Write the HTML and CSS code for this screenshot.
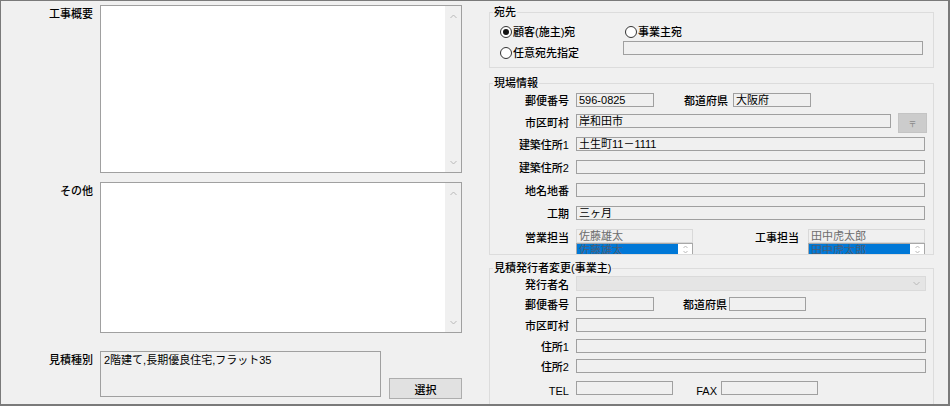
FILE: index.html
```html
<!DOCTYPE html>
<html lang="ja">
<head>
<meta charset="utf-8">
<title>見積</title>
<link rel="stylesheet" href="styles.css">
</head>
<body>
<div class="window">
  <div class="left">
    <div class="lrow memo">
      <div class="lbl">工事概要</div>
      <div class="tarea tall">
        <div class="vscroll">
          <svg class="chev" width="7" height="5" viewBox="0 0 7 5"><polyline points="0.5,4 3.5,1 6.5,4"/></svg>
          <svg class="chev" width="7" height="5" viewBox="0 0 7 5"><polyline points="0.5,1 3.5,4 6.5,1"/></svg>
        </div>
      </div>
    </div>
    <div class="lrow other">
      <div class="lbl">その他</div>
      <div class="tarea mid">
        <div class="vscroll">
          <svg class="chev" width="7" height="5" viewBox="0 0 7 5"><polyline points="0.5,4 3.5,1 6.5,4"/></svg>
          <svg class="chev" width="7" height="5" viewBox="0 0 7 5"><polyline points="0.5,1 3.5,4 6.5,1"/></svg>
        </div>
      </div>
    </div>
    <div class="lrow kind">
      <div class="lbl">見積種別</div>
      <div class="kindbox">2階建て,長期優良住宅,フラット35</div>
      <button class="btn" type="button">選択</button>
    </div>
  </div>

  <div class="right">
    <fieldset class="grp g-dest">
      <legend>宛先</legend>
      <div class="dest">
        <div class="radio"><span class="dot checked"></span>顧客(施主)宛</div>
        <div class="radio r2"><span class="dot"></span>事業主宛</div>
        <div class="radio low"><span class="dot"></span>任意宛先指定</div>
        <div class="inp dest-inp"></div>
      </div>
    </fieldset>

    <fieldset class="grp g-site">
      <legend>現場情報</legend>
      <div class="form">
        <div class="frow">
          <div class="flbl">郵便番号</div>
          <div class="inp w78">596-0825</div>
          <div class="flbl mid-lbl">都道府県</div>
          <div class="inp w78 pref">大阪府</div>
        </div>
        <div class="frow tall-row">
          <div class="flbl">市区町村</div>
          <div class="inp city">岸和田市</div>
          <button class="zip-btn" type="button">〒</button>
        </div>
        <div class="frow r3">
          <div class="flbl">建築住所1</div>
          <div class="inp full">土生町11－1111</div>
        </div>
        <div class="frow r9">
          <div class="flbl">建築住所2</div>
          <div class="inp full"></div>
        </div>
        <div class="frow r9">
          <div class="flbl">地名地番</div>
          <div class="inp full"></div>
        </div>
        <div class="frow r9">
          <div class="flbl">工期</div>
          <div class="inp full">三ヶ月</div>
        </div>
        <div class="frow r9 staff-row">
          <div class="flbl">営業担当</div>
          <div class="staff">
            <div class="staff-top">佐藤雄太</div>
            <div class="staff-list">
              <div class="sel">佐藤雄太</div>
              <div class="spin"><svg width="5" height="9" viewBox="0 0 5 9"><polyline points="0.5,3 2.5,1 4.5,3"/><polyline points="0.5,6 2.5,8 4.5,6"/></svg></div>
            </div>
          </div>
          <div class="flbl staff-lbl">工事担当</div>
          <div class="staff">
            <div class="staff-top">田中虎太郎</div>
            <div class="staff-list">
              <div class="sel">田中虎太郎</div>
              <div class="spin"><svg width="5" height="9" viewBox="0 0 5 9"><polyline points="0.5,3 2.5,1 4.5,3"/><polyline points="0.5,6 2.5,8 4.5,6"/></svg></div>
            </div>
          </div>
        </div>
      </div>
    </fieldset>

    <fieldset class="grp g-issuer">
      <legend>見積発行者変更(事業主)</legend>
      <div class="form issuer">
        <div class="frow combo-row">
          <div class="flbl">発行者名</div>
          <div class="combo">
            <svg width="7" height="5" viewBox="0 0 7 5"><polyline points="0.5,1 3.5,4 6.5,1"/></svg>
          </div>
        </div>
        <div class="frow g6">
          <div class="flbl">郵便番号</div>
          <div class="inp w78"></div>
          <div class="flbl mid-lbl2">都道府県</div>
          <div class="inp w77"></div>
        </div>
        <div class="frow g7">
          <div class="flbl">市区町村</div>
          <div class="inp w350"></div>
        </div>
        <div class="frow g7">
          <div class="flbl">住所1</div>
          <div class="inp w350"></div>
        </div>
        <div class="frow g6">
          <div class="flbl">住所2</div>
          <div class="inp w350"></div>
        </div>
        <div class="frow g8">
          <div class="flbl tel">TEL</div>
          <div class="inp w97"></div>
          <div class="flbl fax">FAX</div>
          <div class="inp w97"></div>
        </div>
      </div>
    </fieldset>
  </div>
</div>
</body>
</html>
```
FILE: styles.css
```css
* { box-sizing: border-box; }
html, body { margin: 0; padding: 0; }
body {
  width: 950px;
  height: 406px;
  overflow: hidden;
  background: #f0f0f0;
  font-family: "Liberation Sans", "Noto Sans CJK JP", sans-serif;
  font-size: 11px;
  color: #000;
}
.window {
  width: 950px;
  height: 406px;
  border-style: solid;
  border-color: #7a7a7a;
  border-width: 1px 2px 2px 1px;
  display: flex;
  align-items: flex-start;
  overflow: hidden;
  background: #f0f0f0;
}

/* left column */
.left { width: 461px; flex: none; display: flex; flex-direction: column; }
.lrow { display: flex; gap: 7px; flex: none; }
.lbl { width: 92px; flex: none; text-align: right; line-height: 14px; padding-top: 2px; font-weight: 500; }
.memo { margin-top: 4px; }
.other { margin-top: 9px; }
.kind { margin-top: 18px; height: 48px; }
.tarea {
  width: 362px;
  background: #fff;
  border: 1px solid #a0a0a0;
  display: flex;
  justify-content: flex-end;
}
.tall { height: 168px; }
.mid { height: 151px; }
.vscroll {
  width: 16px;
  background: #f0f0f0;
  display: flex;
  flex-direction: column;
  justify-content: space-between;
  align-items: center;
  padding: 8px 0 7px;
}
.chev polyline, .combo polyline, .spin polyline { fill: none; stroke: #b8b8b8; stroke-width: 1; }
.kindbox {
  width: 282px;
  height: 46px;
  border: 1px solid #a0a0a0;
  background: #f0f0f0;
  padding: 1px 3px;
  line-height: 14px;
}
.btn {
  width: 73px;
  height: 21px;
  margin-left: 1px;
  align-self: flex-end;
  background: #e1e1e1;
  border: 1px solid #adadad;
  font: inherit;
  font-weight: 500;
  color: #000;
  padding: 0;
}

/* right column */
.right { width: 445px; flex: none; margin-left: 27px; display: flex; flex-direction: column; }
.grp {
  flex: none;
  margin: 0;
  padding: 0;
  border: 1px solid #dcdcdc;
  min-width: 0;
}
.grp legend { padding: 0 1px; margin-left: 3px; line-height: 14px; font-weight: 500; }
.g-dest { margin-top: 4px; height: 63px; }
.g-site { margin-top: 8px; height: 179px; overflow: hidden; }
.g-issuer { margin-top: 6px; height: 160px; }

.dest {
  display: grid;
  grid-template-columns: 123px 300px;
  grid-template-rows: 12px 18px;
  row-gap: 3px;
  padding: 7px 0 0 10px;
  font-weight: 500;
}
.radio { display: flex; align-items: center; gap: 1px; line-height: 12px; height: 12px; }
.radio.r2 { margin-left: 2px; }
.radio.low { align-self: end; }
.dot {
  width: 12px;
  height: 12px;
  flex: none;
  border: 1px solid #333;
  border-radius: 50%;
  background: #fff;
  display: flex;
  align-items: center;
  justify-content: center;
}
.dot.checked::after {
  content: "";
  width: 6px;
  height: 6px;
  border-radius: 50%;
  background: #111;
}
.dest-inp { width: 300px; align-self: start; }

.inp {
  height: 14px;
  border: 1px solid #a0a0a0;
  background: #f0f0f0;
  padding: 0 2px;
  line-height: 12px;
  white-space: nowrap;
  overflow: hidden;
  flex: none;
}

.form { display: flex; flex-direction: column; padding-top: 3px; }
.frow { display: flex; align-items: center; height: 14px; flex: none; }
.flbl { width: 79px; flex: none; text-align: right; line-height: 14px; padding-top: 2px; margin-right: 7px; font-weight: 500; }
.w78 { width: 78px; }
.w77 { width: 77px; }
.w97 { width: 97px; }
.w350 { width: 350px; }
.full { width: 349px; }
.mid-lbl { width: 74px; margin-right: 5px; }
.mid-lbl2 { width: 73px; margin-right: 2px; }
.tall-row { margin-top: 6px; height: 20px; align-items: flex-start; }
.tall-row .flbl { margin-top: 1px; }
.city { width: 315px; margin-top: 1px; }
.zip-btn {
  width: 29px;
  height: 20px;
  margin-left: 7px;
  background: #cccccc;
  border: 1px solid #c4c4c4;
  color: #8a8a8a;
  font-size: 8px;
  padding: 0;
  font-family: "Noto Sans CJK JP", sans-serif;
}
.r3 { margin-top: 4px; }
.r9 { margin-top: 9px; }

.staff-row { align-items: flex-start; height: auto; }
.staff { width: 117px; flex: none; display: flex; flex-direction: column; }
.staff-top {
  height: 14px;
  border: 1px solid #d9d9d9;
  background: #f0f0f0;
  color: #6d6d6d;
  padding-left: 2px;
  line-height: 12px;
}
.staff-list {
  height: 24px;
  border: 1px solid #a8a8a8;
  background: #fff;
  display: flex;
}
.sel {
  width: 101px;
  height: 12px;
  background: #0078d7;
  color: #4a5f78;
  line-height: 12px;
  padding-left: 2px;
}
.spin { flex: 1; display: flex; justify-content: center; padding-top: 1px; }
.staff-lbl { width: 106px; margin-right: 9px; }

.issuer { padding-top: 1px; }
.combo-row { height: 15px; }
.combo {
  width: 350px;
  height: 15px;
  background: #e5e5e5;
  border: 1px solid #dadada;
  display: flex;
  justify-content: flex-end;
  align-items: center;
  padding-right: 5px;
}
.g6 { margin-top: 6px; }
.g7 { margin-top: 7px; }
.g8 { margin-top: 8px; }
.tel { padding-top: 6px; }
.fax { width: 44px; padding-top: 6px; margin-right: 4px; }
```
